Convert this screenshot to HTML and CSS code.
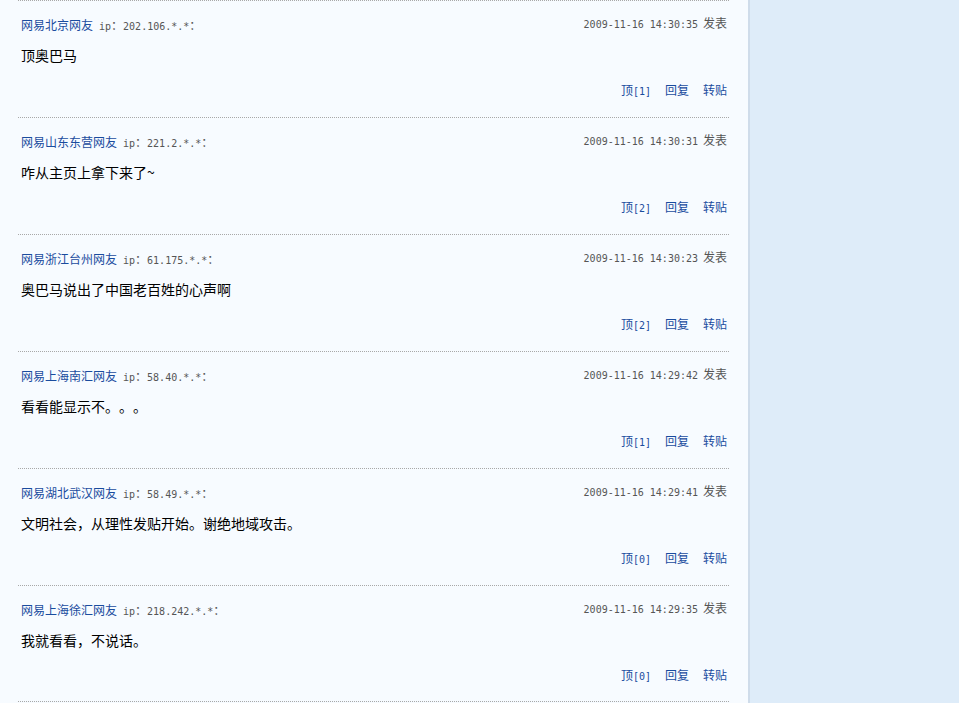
FILE: index.html
```html
<!DOCTYPE html>
<html lang="zh-CN">
<head>
    <meta charset="UTF-8">
    <title>跟贴</title>
    <link rel="stylesheet" href="styles.css">
</head>
<body>
    <div class="page">
        <main class="main">
            <ul class="replies">
                <li class="reply">
                    <div class="reply-head">
                        <span><a class="author" href="#">网易北京网友</a><span class="ip">ip<b>：</b>202.106.*.*<b>：</b></span></span>
                        <span class="time"><span class="mono">2009-11-16 14:30:35</span>发表</span>
                    </div>
                    <p class="reply-body">顶奥巴马</p>
                    <div class="reply-ops">
                        <a href="#">顶<span class="mono">[1]</span></a>
                        <a href="#">回复</a>
                        <a href="#">转贴</a>
                    </div>
                </li>
                <li class="reply">
                    <div class="reply-head">
                        <span><a class="author" href="#">网易山东东营网友</a><span class="ip">ip<b>：</b>221.2.*.*<b>：</b></span></span>
                        <span class="time"><span class="mono">2009-11-16 14:30:31</span>发表</span>
                    </div>
                    <p class="reply-body">咋从主页上拿下来了~</p>
                    <div class="reply-ops">
                        <a href="#">顶<span class="mono">[2]</span></a>
                        <a href="#">回复</a>
                        <a href="#">转贴</a>
                    </div>
                </li>
                <li class="reply">
                    <div class="reply-head">
                        <span><a class="author" href="#">网易浙江台州网友</a><span class="ip">ip<b>：</b>61.175.*.*<b>：</b></span></span>
                        <span class="time"><span class="mono">2009-11-16 14:30:23</span>发表</span>
                    </div>
                    <p class="reply-body">奥巴马说出了中国老百姓的心声啊</p>
                    <div class="reply-ops">
                        <a href="#">顶<span class="mono">[2]</span></a>
                        <a href="#">回复</a>
                        <a href="#">转贴</a>
                    </div>
                </li>
                <li class="reply">
                    <div class="reply-head">
                        <span><a class="author" href="#">网易上海南汇网友</a><span class="ip">ip<b>：</b>58.40.*.*<b>：</b></span></span>
                        <span class="time"><span class="mono">2009-11-16 14:29:42</span>发表</span>
                    </div>
                    <p class="reply-body">看看能显示不。。。</p>
                    <div class="reply-ops">
                        <a href="#">顶<span class="mono">[1]</span></a>
                        <a href="#">回复</a>
                        <a href="#">转贴</a>
                    </div>
                </li>
                <li class="reply">
                    <div class="reply-head">
                        <span><a class="author" href="#">网易湖北武汉网友</a><span class="ip">ip<b>：</b>58.49.*.*<b>：</b></span></span>
                        <span class="time"><span class="mono">2009-11-16 14:29:41</span>发表</span>
                    </div>
                    <p class="reply-body">文明社会，从理性发贴开始。谢绝地域攻击。</p>
                    <div class="reply-ops">
                        <a href="#">顶<span class="mono">[0]</span></a>
                        <a href="#">回复</a>
                        <a href="#">转贴</a>
                    </div>
                </li>
                <li class="reply">
                    <div class="reply-head">
                        <span><a class="author" href="#">网易上海徐汇网友</a><span class="ip">ip<b>：</b>218.242.*.*<b>：</b></span></span>
                        <span class="time"><span class="mono">2009-11-16 14:29:35</span>发表</span>
                    </div>
                    <p class="reply-body">我就看看，不说话。</p>
                    <div class="reply-ops">
                        <a href="#">顶<span class="mono">[0]</span></a>
                        <a href="#">回复</a>
                        <a href="#">转贴</a>
                    </div>
                </li>
            </ul>
        </main>
        <aside class="side"></aside>
    </div>
</body>
</html>
```

FILE: styles.css
```css
* {
    margin: 0;
    padding: 0;
    box-sizing: border-box;
}

body {
    font-family: "Noto Sans CJK SC", sans-serif;
    font-size: 12px;
    color: #000;
    background: #deecf9;
    text-spacing-trim: space-all;
}

a {
    color: #1a4c9e;
    text-decoration: none;
}

.page {
    display: flex;
    min-height: 703px;
}

.main {
    width: 750px;
    background: #f7fbff;
    border-right: 2px solid #cfdcea;
    padding-left: 18px;
}

.side {
    flex: 1;
}

.replies {
    list-style: none;
    width: 711px;
}

.reply {
    height: 117px;
    border-top: 1px dotted #a8a8a8;
    padding: 16px 2px 0 3px;
}

.reply:last-child {
    border-bottom: 1px dotted #a8a8a8;
}

.reply-head {
    display: flex;
    justify-content: space-between;
    align-items: baseline;
    line-height: 16px;
    color: #555;
}

.ip,
.mono {
    font-family: "DejaVu Sans Mono", "Liberation Mono", monospace;
    font-size: 10px;
}

.ip {
    color: #555;
    margin-left: 6px;
}

.ip b {
    font-family: "Noto Sans CJK SC", sans-serif;
    font-weight: normal;
    font-size: 12px;
}

.time {
    position: relative;
    top: -2px;
}

.time .mono {
    margin-right: 5px;
}

.reply-body {
    margin-top: 10px;
    font-size: 14px;
    line-height: 20px;
}

.reply-ops {
    display: flex;
    justify-content: flex-end;
    gap: 14px;
    margin-top: 17px;
    line-height: 16px;
}
```
